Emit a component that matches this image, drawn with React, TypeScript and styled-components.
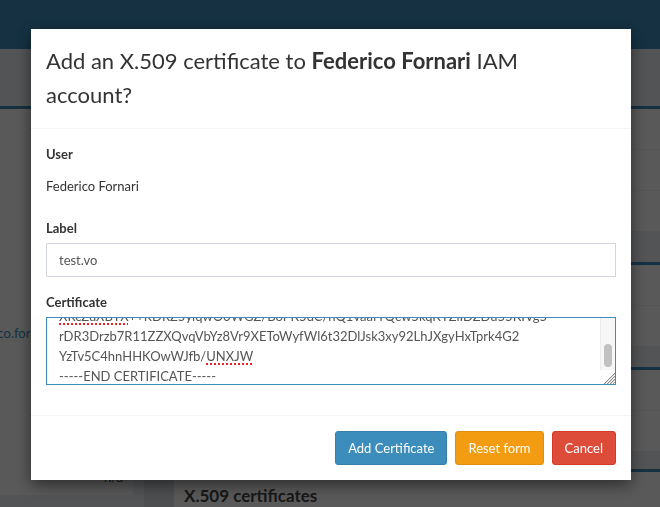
import React, { useLayoutEffect, useRef, useState } from "react";
import styled, { createGlobalStyle, css } from "styled-components";

const GlobalStyle = createGlobalStyle`
  html, body {
    margin: 0;
    padding: 0;
    overflow: hidden;
    background: #ecf0f5;
  }
  body {
    font-family: Lato, "Open Sans", "Noto Sans", sans-serif;
    font-size: 13px;
    line-height: 20px;
    color: #333;
  }
  * { box-sizing: border-box; }
`;

/* ---------- underlying page (dimmed by the backdrop) ---------- */

const Page = styled.div`
  width: 660px;
  height: 507px;
  overflow: hidden;
  background: #ecf0f5;
`;

const TopBar = styled.header`
  height: 49px;
  background: #3c8dbc;
`;

const Content = styled.main`
  display: flex;
  padding-top: 57px;
`;

const LeftColumn = styled.aside`
  width: 133px;
  flex: none;
`;

const ProfileBox = styled.section`
  height: 389px;
  overflow: hidden;
  background: #fff;
  border-top: 3px solid #3c8dbc;
  padding: 10px;
`;

const ProfileTop = styled.div`
  height: 190px;
  text-align: center;
  font-size: 17px;
  color: #444;
  padding-top: 90px;
`;

const InfoRow = styled.div`
  display: flex;
  justify-content: flex-end;
  white-space: nowrap;
  padding: 14px 0;
  color: #333;
`;

const InfoLink = styled.a`
  color: #3c8dbc;
  text-decoration: none;
`;

const RightColumn = styled.div`
  flex: 1;
  margin-left: 11px;
  display: flex;
  flex-direction: column;
`;

const Box = styled.section<{ $gap?: number }>`
  background: #fff;
  border-top: 3px solid #3c8dbc;
  margin-bottom: ${(p) => p.$gap ?? 0}px;
`;

const BoxHeader = styled.div`
  padding: 10px;
  border-bottom: 1px solid #f4f4f4;
  line-height: 20px;
  font-size: 17px;
  color: #444;
`;

const BoxRow = styled.div<{ $divider?: boolean }>`
  padding: 10px;
  line-height: 20px;
  ${(p) =>
    p.$divider &&
    css`
      border-bottom: 1px solid #f4f4f4;
    `}
`;

const BottomRow = styled.div`
  display: flex;
`;

const SideStrip = styled.div`
  width: 30px;
  flex: none;
  background: #dcdfe4;
`;

const CertBox = styled.section`
  flex: 1;
  background: #fff;
  border-top: 3px solid #3c8dbc;
  height: 60px;
`;

const CertBoxTitle = styled.h3`
  margin: 0;
  padding: 15px 10px 10px;
  font-size: 17px;
  line-height: 1.1;
  font-weight: 700;
  color: #444;
`;

/* ---------- modal ---------- */

const Backdrop = styled.div`
  position: fixed;
  inset: 0;
  background: rgba(0, 0, 0, 0.65);
  z-index: 10;
`;

const ModalLayer = styled.div`
  position: fixed;
  inset: 0;
  z-index: 20;
  overflow: hidden;
`;

const Dialog = styled.div`
  width: 600px;
  margin: 29px 0 0 31px;
  background: #fff;
  box-shadow: 0 5px 15px rgba(0, 0, 0, 0.5);
`;

const ModalHeader = styled.div`
  padding: 15px;
  border-bottom: 1px solid #f4f4f4;
`;

const ModalTitle = styled.h4`
  margin: 0;
  font-size: 22px;
  line-height: 34.3px;
  font-weight: 400;
  color: #333;

  strong {
    font-weight: 700;
  }
`;

const ModalBody = styled.div`
  padding: 15px;
`;

const FormGroup = styled.div`
  margin-bottom: 15px;
`;

const Label = styled.label`
  display: block;
  margin-bottom: 5px;
  font-weight: 700;
`;

const StaticValue = styled.p`
  margin: 0;
  padding: 7px 0;
  min-height: 34px;
`;

const TextInput = styled.input`
  display: block;
  width: 100%;
  height: 34px;
  padding: 6px 12px;
  border: 1px solid #d2d6de;
  border-radius: 0;
  font: inherit;
  color: #555;
  background: #fff;
  outline: none;
`;

const CertField = styled.div`
  display: flex;
  height: 68px;
  border: 1px solid #3c8dbc;
  background: #fff;
`;

const CertViewport = styled.div`
  flex: 1;
  min-width: 0;
  padding: 6px 12px;
  color: #555;
  white-space: pre;
  overflow: hidden;
  outline: none;
`;

const ScrollColumn = styled.div`
  width: 15px;
  flex: none;
  display: flex;
  flex-direction: column;
`;

const ScrollTrack = styled.div`
  flex: 1;
  background: #f7f7f7;
  border-left: 1px solid #ececec;
  padding: 0 3px;
`;

const ScrollThumb = styled.div`
  width: 8px;
  border-radius: 4px;
  background: #c1c1c1;
`;

const Resizer = styled.div`
  height: 14px;
  background: #fff;
  display: flex;
  align-items: flex-end;
  justify-content: flex-end;
`;

const Misspelled = styled.span`
  text-decoration: underline dotted #e8202a;
  text-decoration-thickness: 2px;
  text-underline-offset: 3px;
`;

const ModalFooter = styled.div`
  display: flex;
  justify-content: flex-end;
  gap: 8px;
  padding: 15px;
  border-top: 1px solid #f4f4f4;
`;

const variants = {
  primary: { bg: "#3c8dbc", border: "#367fa9" },
  warning: { bg: "#f39c12", border: "#e08e0b" },
  danger: { bg: "#dd4b39", border: "#d73925" },
};

const Button = styled.button<{ $variant: keyof typeof variants }>`
  padding: 6px 12px;
  font: inherit;
  font-size: 13px;
  line-height: 20px;
  color: #fff;
  border-radius: 3px;
  border: 1px solid ${(p) => variants[p.$variant].border};
  background: ${(p) => variants[p.$variant].bg};
  cursor: pointer;
`;

const ResizeGrip = () => (
  <svg width="14" height="14" viewBox="0 0 14 14" aria-hidden="true">
    <g stroke="#8a8a8a" strokeWidth="1">
      <line x1="3" y1="14" x2="14" y2="3" />
      <line x1="6" y1="14" x2="14" y2="6" />
      <line x1="9" y1="14" x2="14" y2="9" />
      <line x1="12" y1="14" x2="14" y2="12" />
    </g>
    <g stroke="#d6d6d6" strokeWidth="1">
      <line x1="4" y1="14" x2="14" y2="4" />
      <line x1="7" y1="14" x2="14" y2="7" />
      <line x1="10" y1="14" x2="14" y2="10" />
    </g>
  </svg>
);

export default function App() {
  const viewportRef = useRef<HTMLDivElement>(null);
  const [thumb, setThumb] = useState({ top: 27, height: 23 });

  useLayoutEffect(() => {
    const el = viewportRef.current;
    if (!el) return;
    const max = el.scrollHeight - el.clientHeight;
    el.scrollTop = Math.max(0, max - 8);
    const track = el.clientHeight - 14;
    const h = Math.max(16, (track * el.clientHeight) / el.scrollHeight);
    const top = max > 0 ? ((track - h) * el.scrollTop) / max : 0;
    setThumb({ top, height: h });
  }, []);

  return (
    <>
      <GlobalStyle />
      <Page>
        <TopBar />
        <Content>
          <LeftColumn>
            <ProfileBox>
              <ProfileTop>Federico Fornari</ProfileTop>
              <InfoRow>
                <InfoLink href="#">federico.fornari@cnaf.infn.it</InfoLink>
              </InfoRow>
              <InfoRow>active</InfoRow>
              <InfoRow>2018-01-10</InfoRow>
              <InfoRow>n/a</InfoRow>
            </ProfileBox>
          </LeftColumn>
          <RightColumn>
            <Box $gap={31}>
              <BoxHeader>Account information</BoxHeader>
              <BoxRow $divider>Username</BoxRow>
              <BoxRow>Created</BoxRow>
            </Box>
            <Box $gap={21}>
              <BoxHeader>Groups</BoxHeader>
              <BoxRow>No groups</BoxRow>
            </Box>
            <Box $gap={18}>
              <BoxHeader>SSH keys</BoxHeader>
              <BoxRow>No keys</BoxRow>
            </Box>
            <BottomRow>
              <SideStrip />
              <CertBox>
                <CertBoxTitle>X.509 certificates</CertBoxTitle>
              </CertBox>
            </BottomRow>
          </RightColumn>
        </Content>
      </Page>

      <Backdrop />
      <ModalLayer>
        <Dialog role="dialog" aria-modal="true">
          <ModalHeader>
            <ModalTitle>
              Add an X.509 certificate to <strong>Federico Fornari</strong> IAM
              <br />
              account?
            </ModalTitle>
          </ModalHeader>
          <ModalBody>
            <FormGroup>
              <Label>User</Label>
              <StaticValue>Federico Fornari</StaticValue>
            </FormGroup>
            <FormGroup>
              <Label htmlFor="label">Label</Label>
              <TextInput id="label" defaultValue="test.vo" />
            </FormGroup>
            <FormGroup>
              <Label>Certificate</Label>
              <CertField>
                <CertViewport ref={viewportRef} role="textbox" aria-multiline="true">
                  {"-----BEGIN CERTIFICATE-----\n"}
                  {"MIIDnjCCAoagAwIBAgIBCDANBgkqhkiG9w0BAQsFADAtMQswCQYDVQQGEwJJVDEM\n"}
                  {"MAoGA1UECgwDSUdJMRAwDgYDVQQDDAdUZXN0IENBMB4XDTE3MDkxMjEyMDMxN1oX\n"}
                  <Misspelled>XRcZuXBTX</Misspelled>
                  {"++RDRZ5yiqwO0WGZ/BoPK5dC/hQ1vaafTQcw5kqKTZlIDZDu55KIVg5\n"}
                  {"rDR3Drzb7R11ZZXQvqVbYz8Vr9XEToWyfWl6t32DlJsk3xy92LhJXgyHxTprk4G2\n"}
                  {"YzTv5C4hnHHKOwWJfb/"}
                  <Misspelled>UNXJW</Misspelled>
                  {"\n-----END CERTIFICATE-----"}
                </CertViewport>
                <ScrollColumn>
                  <ScrollTrack>
                    <ScrollThumb style={{ marginTop: thumb.top, height: thumb.height }} />
                  </ScrollTrack>
                  <Resizer>
                    <ResizeGrip />
                  </Resizer>
                </ScrollColumn>
              </CertField>
            </FormGroup>
          </ModalBody>
          <ModalFooter>
            <Button $variant="primary">Add Certificate</Button>
            <Button $variant="warning">Reset form</Button>
            <Button $variant="danger">Cancel</Button>
          </ModalFooter>
        </Dialog>
      </ModalLayer>
    </>
  );
}
